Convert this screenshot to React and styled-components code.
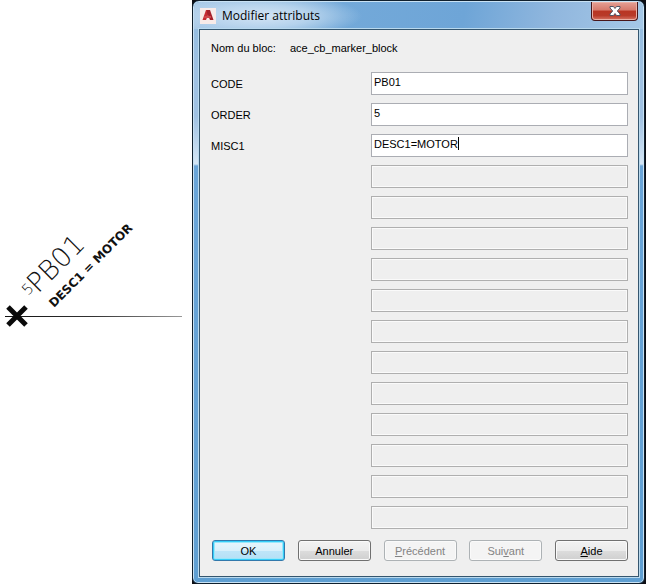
import { useState } from 'react'
import styled, { createGlobalStyle } from 'styled-components'

const attributes = [
	{ tag: 'CODE', value: 'PB01' },
	{ tag: 'ORDER', value: '5' },
	{ tag: 'MISC1', value: 'DESC1=MOTOR' },
]

const EMPTY_ROWS = 12

export default function App() {
	const [values, setValues] = useState(
		attributes.map(({ value }) => value)
	)

	const update = (index, value) =>
		setValues(values.map((v, i) => (i === index ? value : v)))

	return (
		<Page>
			<GlobalStyle />

			<Drawing />

			<Backdrop>
				<Dialog role='dialog' aria-labelledby='title'>
					<TitleBar>
						<AppIcon />
						<Title id='title'>Modifier attributs</Title>
						<CloseButton aria-label='Fermer'>
							<CloseIcon />
						</CloseButton>
					</TitleBar>

					<Client>
						<BlockName>
							<span>Nom du bloc:</span>
							<span>ace_cb_marker_block</span>
						</BlockName>

						<Fields>
							{attributes.map(({ tag }, index) => (
								<Row key={tag}>
									<Label htmlFor={tag}>{tag}</Label>
									<InputBox>
										<Input
											id={tag}
											value={values[index]}
											onChange={(e) =>
												update(index, e.target.value)
											}
										/>
										{tag === 'MISC1' && <Caret />}
									</InputBox>
								</Row>
							))}

							{Array.from({ length: EMPTY_ROWS }, (_, index) => (
								<Row key={index}>
									<span />
									<Input
										disabled
										aria-label={`Attribut ${index + 4}`}
									/>
								</Row>
							))}
						</Fields>

						<Buttons>
							<Button $primary>OK</Button>
							<Button>Annuler</Button>
							<Button disabled>
								<u>P</u>récédent
							</Button>
							<Button disabled>
								Sui<u>v</u>ant
							</Button>
							<Button>
								<u>A</u>ide
							</Button>
						</Buttons>
					</Client>
				</Dialog>
			</Backdrop>
		</Page>
	)
}

// Wire with its marker block and the attribute texts
function Drawing() {
	return (
		<Canvas viewBox='0 0 192 584' width='192' height='584'>
			<defs>
				<linearGradient id='wire'>
					<stop offset='0' stopColor='#111' />
					<stop offset='0.5' stopColor='#333' />
					<stop offset='1' stopColor='#999' />
				</linearGradient>
			</defs>
			<rect x='5' y='316' width='177' height='1' fill='url(#wire)' />
			<path
				d='M8 307 L26 325 M26 307 L8 325'
				stroke='#0a0a0a'
				strokeWidth='5'
			/>
			<MarkerText
				transform='translate(28 296) rotate(-45)'
				fontSize='15'
			>
				5
			</MarkerText>
			<MarkerText
				transform='translate(38 294) rotate(-45)'
				fontSize='27'
			>
				PB01
			</MarkerText>
			<DescText transform='translate(54 308) rotate(-45)'>
				DESC1 = MOTOR
			</DescText>
		</Canvas>
	)
}

function AppIcon() {
	return (
		<svg width='16' height='16' viewBox='0 0 16 16' aria-hidden='true'>
			<rect width='16' height='16' fill='#f8ebe8' />
			<path d='M2.5 12 L6 2 H9.5 L9 5 L6 12 Z' fill='#c62a32' />
			<path d='M7 2 H10 L13.5 12 H10 L7 5 Z' fill='#a5202a' />
			<path d='M4.5 8 H11 V10 H4 Z' fill='#d0474c' />
		</svg>
	)
}

function CloseIcon() {
	return (
		<svg width='12' height='10' viewBox='0 0 12 10' aria-hidden='true'>
			<path
				d='M1 0.5 H4.5 L6 2.5 L7.5 0.5 H11 V2 L8.3 5 L11 8 V9.5 H7.5 L6 7.5 L4.5 9.5 H1 V8 L3.7 5 L1 2 Z'
				fill='#fff'
				stroke='#535666'
			/>
		</svg>
	)
}

// Styled components
const GlobalStyle = createGlobalStyle`
	* {
		box-sizing: border-box;
	}

	body {
		margin: 0;
		background: white;
	}
`

const Page = styled.main`
	display: flex;
	align-items: flex-start;
	font-family: 'Liberation Sans', sans-serif;
	font-size: 11px;
	line-height: 16px;
	color: #000;
`

const Canvas = styled.svg`
	flex: none;
`

const MarkerText = styled.text`
	font-family: 'DejaVu Sans Light', 'DejaVu Sans', sans-serif;
	font-weight: 200;
	fill: #111;
`

const DescText = styled.text`
	font-family: 'DejaVu Sans', sans-serif;
	font-size: 12px;
	font-weight: bold;
	fill: #111;
`

const Backdrop = styled.div`
	flex: 1;
	min-width: 0;
	padding-right: 1px;
	background: #0c0e14;
`

const Dialog = styled.section`
	padding: 0 5px 6px 6px;
	border: 1px solid #10202e;
	border-radius: 7px 7px 6px 6px;
	box-shadow: inset 0 0 0 1px #c9e2f4;
	background: linear-gradient(
		180deg,
		#8fbbe0 0,
		#9fc1e2 70px,
		#9fc1e2 115px,
		#d5e6f5 163px,
		#6aa5d8 165px,
		#5f9fd2 100%
	);
`

const TitleBar = styled.header`
	display: flex;
	align-items: center;
	gap: 6px;
	height: 27px;
	margin: 1px -4px 0 -5px;
	padding: 0 5px 0 6px;
	border-radius: 6px 6px 0 0;
	background:
		radial-gradient(
			ellipse 100px 22px at 68px 14px,
			#d3e4f4 0,
			#c1daf0cc 50%,
			#c1daf000 100%
		),
		linear-gradient(
			100deg,
			#a6c7e5 0,
			#73a9d9 33%,
			#6ea5d7 60%,
			#91b7de 80%,
			#a5c8e7 100%
		);
`

const Title = styled.h1`
	flex: 1;
	margin: 0;
	font-family: 'Open Sans', sans-serif;
	font-size: 12px;
	font-weight: 400;
`

const CloseButton = styled.button`
	display: flex;
	align-items: center;
	justify-content: center;
	align-self: flex-start;
	width: 47px;
	height: 19px;
	padding: 0;
	border: 1px solid #47161a;
	border-top: 0;
	border-radius: 0 0 4px 4px;
	box-shadow: inset 0 0 0 1px #e9b0a6;
	background: linear-gradient(
		180deg,
		#e5a095 0,
		#d6796b 45%,
		#b93523 50%,
		#b83a29 75%,
		#d77566 100%
	);
`

const Client = styled.div`
	padding: 10px 10px 15px 11px;
	border: 1px solid #35566f;
	box-shadow: 0 0 0 1px #b9d9ee;
	background: #efefef;
`

const BlockName = styled.div`
	display: grid;
	grid-template-columns: 79px 1fr;
`

const Fields = styled.div`
	display: grid;
	gap: 8px;
	margin-top: 16px;
`

const Row = styled.div`
	display: grid;
	grid-template-columns: 160px 1fr;
	align-items: center;
`

const Label = styled.label`
	cursor: default;
`

const InputBox = styled.div`
	position: relative;
	display: grid;
`

const Input = styled.input`
	width: 100%;
	height: 23px;
	padding: 0 2px 3px;
	border: 1px solid #abadb3;
	border-radius: 0;
	outline: none;
	background: white;
	font: inherit;
	color: inherit;

	&:disabled {
		border-color: #afafaf;
		box-shadow: inset 0 0 0 1px #fafafa;
		background: #efefef;
	}
`

const Caret = styled.span`
	position: absolute;
	top: 3px;
	left: 87px;
	width: 1px;
	height: 13px;
	background: #000;
`

const Buttons = styled.footer`
	display: flex;
	justify-content: space-between;
	margin: 11px 0 0 1px;
`

const Button = styled.button`
	width: 73px;
	height: 21px;
	padding: 0;
	border: 1px solid ${({ $primary }) => ($primary ? '#3279ac' : '#707070')};
	border-radius: 3px;
	box-shadow: ${({ $primary }) =>
		$primary
			? 'inset 0 0 0 1px #35cdf8, inset 0 0 0 2px #9be7fb'
			: 'inset 0 0 0 1px #fafafa'};
	background: ${({ $primary }) =>
		$primary
			? 'linear-gradient(180deg, #e8f5fc 0, #d9f0fb 50%, #bee6f9 50%, #b5dff5 100%)'
			: 'linear-gradient(180deg, #f2f2f2 0, #ebebeb 50%, #dddddd 50%, #cfcfcf 100%)'};
	font: inherit;
	color: inherit;

	&:disabled {
		border-color: #adb2b5;
		background: #f4f4f4;
		color: #838383;
	}
`
